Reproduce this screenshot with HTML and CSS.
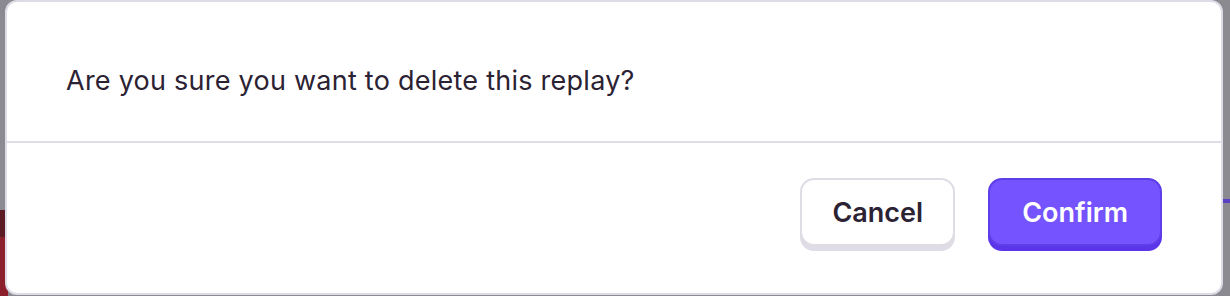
FILE: index.html
```html
<!DOCTYPE html>
<html lang="en">
<head>
<meta charset="utf-8">
<title>Delete replay</title>
<link rel="stylesheet" href="styles.css">
</head>
<body>
<div class="backdrop">
  <div class="modal" role="dialog">
    <div class="modal-body">
      <p class="message">Are you sure you want to delete this replay?</p>
    </div>
    <div class="modal-footer">
      <button class="btn btn-default" type="button">Cancel</button>
      <button class="btn btn-primary" type="button">Confirm</button>
    </div>
  </div>
</div>
</body>
</html>
```
FILE: styles.css
```css
html, body {
  margin: 0;
  padding: 0;
  height: 100%;
}
body {
  font-family: Inter, "Noto Sans", "Liberation Sans", sans-serif;
  background-color: #8c8a91;
  background-image:
    linear-gradient(to bottom, transparent 0, transparent 210px, #5b1a24 210px, #5b1a24 237px, #8c1f2c 237px),
    linear-gradient(to bottom, transparent 0, transparent 199px, #5b3fc4 199px, #5b3fc4 203px, transparent 203px);
  background-size: 8px 100%, 8px 100%;
  background-position: left top, right top;
  background-repeat: no-repeat;
  overflow: hidden;
}
.backdrop {
  display: flex;
  padding: 0 7px 1px 5px;
  height: 296px;
  box-sizing: border-box;
}
.modal {
  flex: 1;
  display: flex;
  flex-direction: column;
  background: #ffffff;
  border: 2px solid #dedae6;
  border-radius: 12px;
  box-sizing: border-box;
}
.modal-body {
  padding: 62px 60px 43px 59px;
}
.message {
  margin: 0;
  font-size: 27px;
  line-height: 34px;
  color: #2b2233;
  letter-spacing: 0.25px;
}
.modal-footer {
  flex: 1;
  display: flex;
  justify-content: flex-end;
  align-items: flex-start;
  gap: 33px;
  border-top: 2px solid #e0dce5;
  padding: 35px 59px 0;
}
.btn {
  height: 68px;
  padding: 0 32px;
  border-radius: 14px;
  font-family: inherit;
  font-size: 27px;
  font-weight: 600;
  line-height: 1;
  cursor: pointer;
  box-sizing: border-box;
}
.btn-default {
  padding: 0 30px;
  background: #ffffff;
  color: #2b2233;
  border: 2px solid #e0dce5;
  box-shadow: 0 5px 0 #e0dce5;
}
.btn-primary {
  background: #7553ff;
  color: #ffffff;
  border: 2px solid #5d3ee8;
  box-shadow: 0 5px 0 #5b35e8;
}
```
